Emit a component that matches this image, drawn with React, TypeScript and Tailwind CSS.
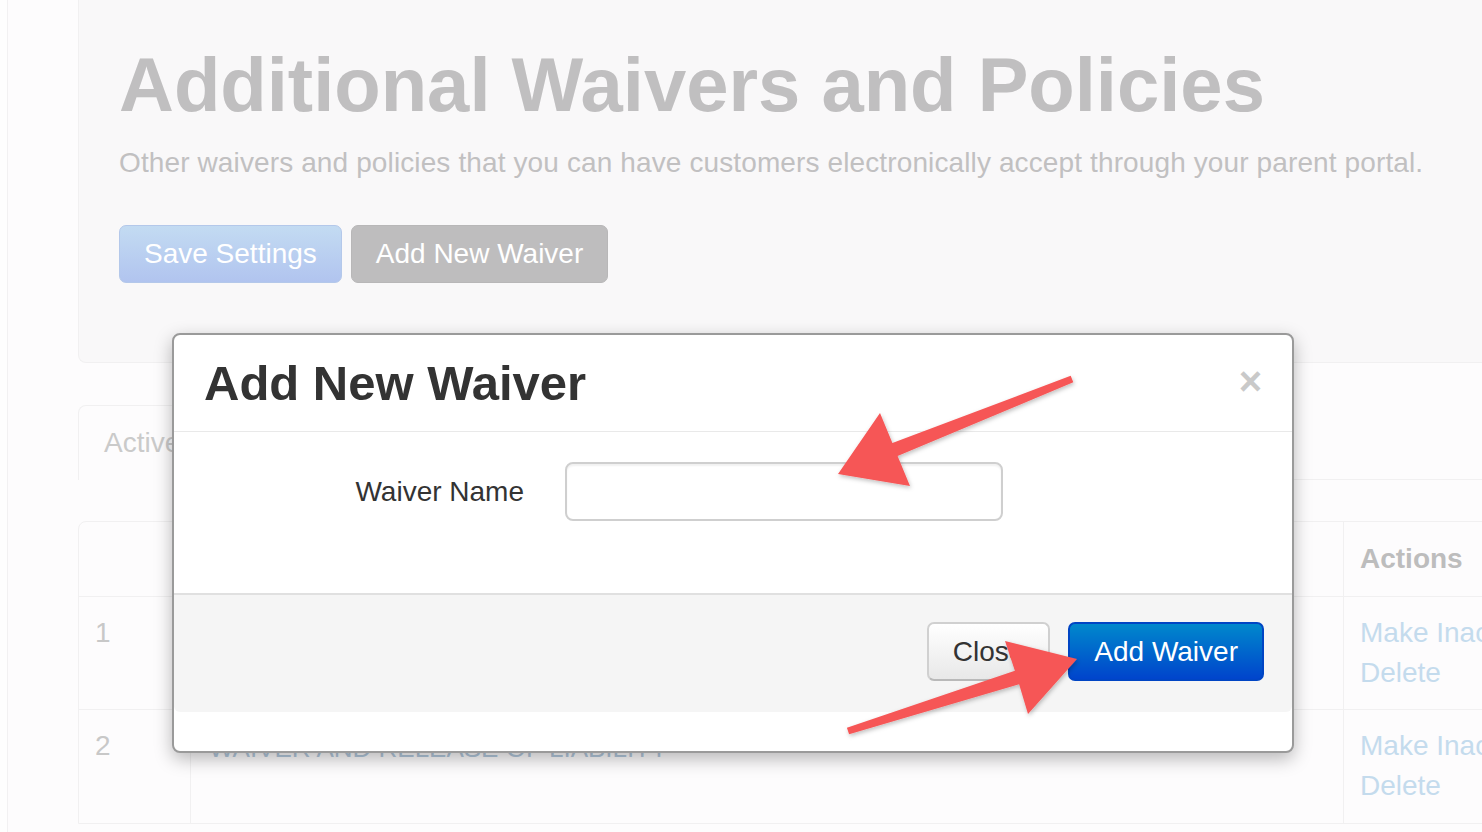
import React from "react"

// Page behind the modal is washed out by the backdrop, so colours are pre-dimmed
const rows = [
  { id: 1, name: "PHOTO AND MEDIA RELEASE" },
  { id: 2, name: "WAIVER AND RELEASE OF LIABILITY" },
]

function Arrows() {
  return (
    <svg className="absolute inset-0 pointer-events-none" width="1482" height="832" viewBox="0 0 1482 832">
      <defs>
        <filter id="arrowShadow" x="-20%" y="-20%" width="140%" height="140%">
          <feDropShadow dx="1" dy="2" stdDeviation="2" floodColor="#000" floodOpacity="0.25" />
        </filter>
      </defs>
      <g fill="#f65656" filter="url(#arrowShadow)">
        <polygon points="1070.7,375.8 892.4,443 880,413 838,474 910,486 897.6,456 1073.3,382.2" />
        <polygon points="846.9,727.7 1014.9,670.8 1005,641 1077,659 1028,714 1019.1,684.2 849.1,734.3" />
      </g>
    </svg>
  )
}

function AddWaiverModal() {
  return (
    <div className="absolute left-[172px] top-[333px] w-[1122px] h-[420px] bg-white border-2 border-[#9a9a9a] rounded-[8px] shadow-[0_6px_18px_rgba(0,0,0,0.28)] flex flex-col">
      {/* Header */}
      <div className="h-[97px] px-[30px] flex items-center justify-between border-b border-[#e9e9e9]">
        <h3 className="text-[49px] leading-[60px] font-bold text-[#333333]">Add New Waiver</h3>
        <span className="text-[40px] leading-[40px] font-bold text-[#c9c9c9] -mt-[4px]">×</span>
      </div>

      {/* Body */}
      <div className="h-[161px] p-[30px] flex items-start">
        <label className="w-[320px] h-[59px] flex items-center justify-end text-[28px] text-[#333333]">
          Waiver Name
        </label>
        <input
          type="text"
          className="ml-[41px] w-[438px] h-[59px] border-2 border-[#cfcfcf] rounded-[8px] bg-white shadow-[inset_0_2px_2px_rgba(0,0,0,0.06)] outline-none"
        />
      </div>

      {/* Footer */}
      <div className="h-[119px] border-t-2 border-[#e0e0e0] bg-[#f5f5f5] rounded-b-[6px] pt-[27px] pr-[28px] flex justify-end items-start gap-[18px]">
        <button className="h-[59px] px-[24px] text-[28px] text-[#333333] rounded-[7px] border-2 border-[#d0d0d0] border-b-[#b9b9b9] bg-[linear-gradient(#ffffff,#e8e8e8)]">
          Close
        </button>
        <button className="h-[59px] px-[24px] text-[28px] text-white rounded-[7px] border-2 border-[#0045c4] bg-[linear-gradient(#0088cc,#0044cc)]">
          Add Waiver
        </button>
      </div>
    </div>
  )
}

export default function App() {
  return (
    <div className="relative w-[1482px] h-[832px] overflow-hidden bg-[#fdfcfd] flex font-['Liberation_Sans',Arial,sans-serif]">
      {/* left rail */}
      <div className="w-[8px] shrink-0 bg-[#fefefe] border-r border-[#f2f1f2]" />
      <div className="w-[70px] shrink-0" />

      <main className="w-[1480px] shrink-0 flex flex-col">
        {/* Hero */}
        <section className="h-[363px] shrink-0 bg-[#f9f8f9] border-l border-b border-[#f1f0f1] rounded-bl-[8px] px-[40px] pt-[45px]">
          <h1 className="text-[76px] leading-[80px] font-bold text-[#c0bfc0]">
            Additional Waivers and Policies
          </h1>
          <p className="mt-[18px] text-[28px] leading-[40px] text-[#c1c0c1] tracking-[0.12px]">
            Other waivers and policies that you can have customers electronically accept through your parent portal.
          </p>
          <div className="mt-[42px] flex gap-[9px]">
            <button className="h-[58px] px-[24px] text-[28px] text-white rounded-[7px] border border-[#b4c8ea] bg-[linear-gradient(#c3dbf2,#b1c4ef)]">
              Save Settings
            </button>
            <button className="h-[58px] px-[24px] text-[28px] text-white rounded-[7px] border border-[#b8b7b8] bg-[#bebdbe]">
              Add New Waiver
            </button>
          </div>
        </section>

        {/* Tabs */}
        <div className="mt-[42px] h-[75px] shrink-0 flex border-b border-[#f1f0f1]">
          <div className="px-[25px] border border-b-0 border-[#f1f0f1] rounded-t-[8px] flex items-center text-[28px] text-[#cacaca] bg-[#fdfcfd] -mb-px">
            Active Waivers
          </div>
        </div>

        {/* Table */}
        <div className="mt-[41px] border border-[#f1f0f1] rounded-tl-[8px]">
          <div className="h-[75px] flex border-b border-[#f1f0f1]">
            <div className="w-[111px]" />
            <div className="w-[1153px] border-l border-[#f1f0f1]" />
            <div className="flex-1 border-l border-[#f1f0f1] px-[16px] flex items-center text-[28px] font-bold text-[#bdbdbd]">
              Actions
            </div>
          </div>
          {rows.map((r, i) => (
            <div key={r.id} className={`h-[113px] flex ${i === 0 ? "border-b border-[#f1f0f1]" : ""}`}>
              <div className="w-[111px] px-[16px] pt-[16px] text-[28px] leading-[40px] text-[#c8c8c8]">{r.id}</div>
              <div className="w-[1153px] border-l border-[#f1f0f1] px-[18px] pt-[18px] text-[26px] leading-[40px] text-[#b3c8dc] whitespace-nowrap">
                {r.name}
              </div>
              <div className="flex-1 border-l border-[#f1f0f1] px-[16px] pt-[16px] text-[28px] leading-[40px] text-[#c4dbed] whitespace-nowrap">
                <div>Make Inactive</div>
                <div>Delete</div>
              </div>
            </div>
          ))}
        </div>
      </main>

      <AddWaiverModal />
      <Arrows />
    </div>
  )
}
